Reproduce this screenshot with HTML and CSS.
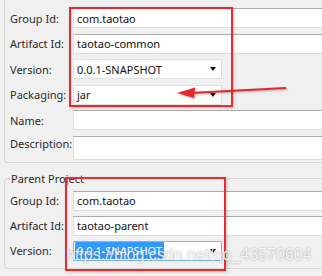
FILE: index.html
```html
<!DOCTYPE html>
<html lang="en">
  <head>
    <meta charset="UTF-8" />
    <meta name="viewport" content="width=device-width, initial-scale=1.0" />
    <title>New Maven Project</title>
    <link rel="stylesheet" href="styles.css">
  </head>
  <body>
    <div class="page">
      <div class="panel">
        <div class="row">
          <label for="group-id">Group Id:</label>
          <input class="field" type="text" id="group-id" value="com.taotao" />
        </div>
        <div class="row">
          <label for="artifact-id">Artifact Id:</label>
          <input class="field" type="text" id="artifact-id" value="taotao-common" />
        </div>
        <div class="row">
          <label>Version:</label>
          <div class="combo"><span>0.0.1-SNAPSHOT</span></div>
        </div>
        <div class="row">
          <label>Packaging:</label>
          <div class="combo"><span>jar</span></div>
        </div>
        <div class="row">
          <label for="name">Name:</label>
          <input class="field" type="text" id="name" value="" />
        </div>
        <div class="row tall">
          <label for="description">Description:</label>
          <textarea class="field" id="description"></textarea>
        </div>
      </div>

      <fieldset class="group">
        <legend>Parent Project</legend>
        <div class="row">
          <label for="parent-group">Group Id:</label>
          <input class="field" type="text" id="parent-group" value="com.taotao" />
        </div>
        <div class="row">
          <label for="parent-artifact">Artifact Id:</label>
          <input class="field" type="text" id="parent-artifact" value="taotao-parent" />
        </div>
        <div class="row">
          <label>Version:</label>
          <div class="combo focus"><span class="selected">0.0.1-SNAPSHOT</span></div>
        </div>
      </fieldset>

      <!-- annotations drawn over the dialog -->
      <div class="mark mark-top"></div>
      <div class="mark mark-bottom"></div>
      <svg class="arrow" width="322" height="276" viewBox="0 0 322 276">
        <line x1="286" y1="88" x2="190" y2="93" stroke="#e8262a" stroke-width="2" />
        <polygon points="177,93 195,87.5 194,98" fill="#e8262a" />
      </svg>
      <div class="watermark">https://blog.csdn.net/qq_43570604</div>
    </div>
  </body>
</html>
```

FILE: styles.css
```css
body {
    margin: 0;
    background: #f0f0f0;
    font-family: "Noto Sans", "Open Sans", sans-serif;
    font-size: 11px;
    color: #2a2a2a;
    overflow: hidden;
}
.page {
    position: relative;
    width: 340px;
    height: 276px;
}
.panel {
    margin-left: 4px;
    border-left: 1px solid #d6d6d6;
    border-bottom: 1px solid #d6d6d6;
    border-bottom-left-radius: 4px;
    padding: 8px 0 2px 5px;
    display: flex;
    flex-direction: column;
    gap: 5.6px;
}
.row {
    display: flex;
    align-items: center;
    height: 20px;
}
.row label {
    width: 63px;
    flex: none;
}
.row.tall {
    height: 24px;
    align-items: flex-start;
}
.row.tall label {
    line-height: 16px;
}
.field {
    flex: 1;
    height: 20px;
    box-sizing: border-box;
    margin: 0;
    border: 1px solid #dedede;
    border-top-color: #ababab;
    background: #fff;
    padding: 0 3px;
    font: inherit;
    color: #111;
    outline: none;
}
textarea.field {
    height: 24px;
    resize: none;
}
.combo {
    width: 149px;
    height: 20px;
    box-sizing: border-box;
    border: 1px solid #e0e0e0;
    background: #fff;
    padding: 0 3px;
    display: flex;
    align-items: center;
    justify-content: space-between;
    color: #111;
}
.combo::after {
    content: "";
    border-left: 3px solid transparent;
    border-right: 3px solid transparent;
    border-top: 4px solid #111;
    margin-right: 2px;
}
.combo.focus {
    border-color: #86b6e6;
    padding-left: 1px;
}
.selected {
    background: #3399ff;
    color: #fff;
    padding: 1px 2px;
}
.group {
    margin: 9px 0 0 4px;
    padding: 5px 0 7px 5px;
    border: 1px solid #d6d6d6;
    border-radius: 4px;
    display: flex;
    flex-direction: column;
    gap: 5px;
}
.group legend {
    padding: 0 1px;
    line-height: 14px;
    color: #2a2a2a;
}
.mark {
    position: absolute;
    border: 2px solid #ec2a2e;
    box-shadow: 1px 1px 3px rgba(0, 0, 0, 0.2);
}
.mark-top {
    left: 69px;
    top: 7px;
    width: 160px;
    height: 96px;
}
.mark-bottom {
    left: 65px;
    top: 177px;
    width: 157px;
    height: 90px;
}
.arrow {
    position: absolute;
    left: 0;
    top: 0;
    filter: drop-shadow(1px 1px 1px rgba(0, 0, 0, 0.3));
}
.watermark {
    position: absolute;
    left: 66px;
    top: 246px;
    font-family: "Liberation Sans", Arial, sans-serif;
    font-size: 16px;
    color: rgba(255, 255, 255, 0.85);
    text-shadow: 0 0 2px rgba(0, 0, 0, 0.35);
    white-space: nowrap;
}
```
